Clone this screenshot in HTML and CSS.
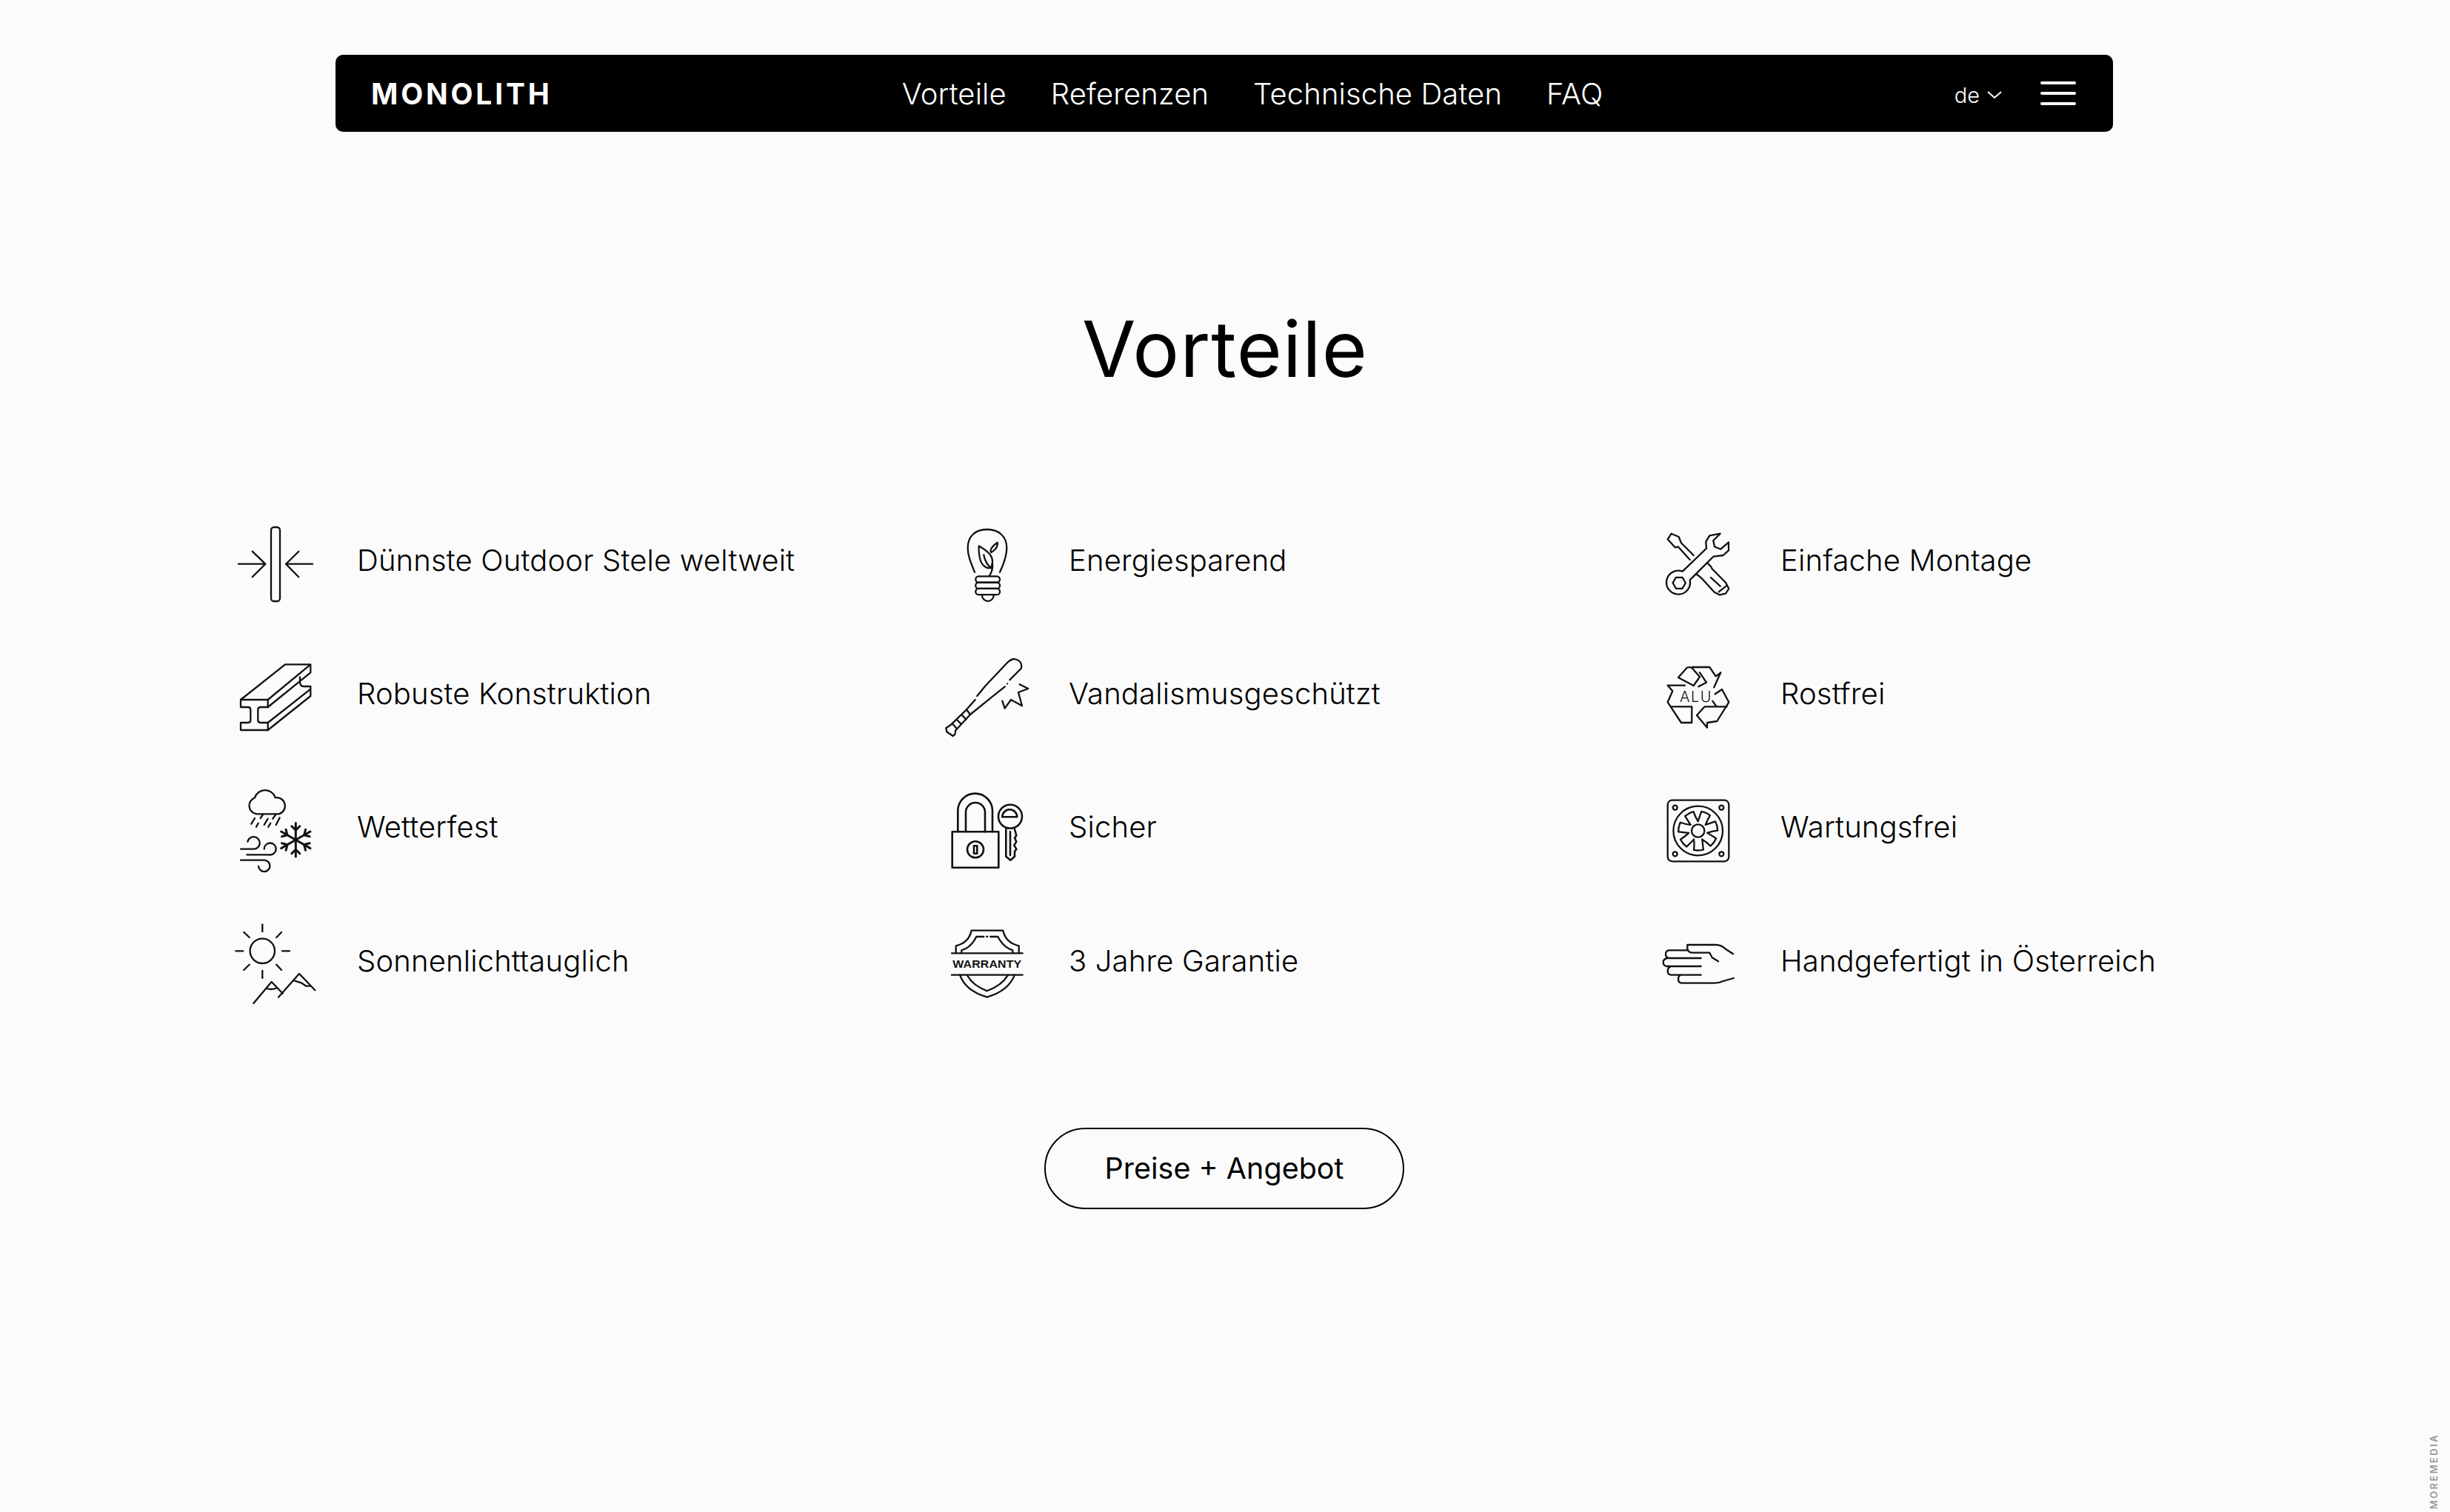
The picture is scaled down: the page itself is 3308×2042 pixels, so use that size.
FILE: index.html
```html
<!DOCTYPE html>
<html lang="de">
<head>
    <meta charset="UTF-8">
    <meta name="viewport" content="width=device-width, initial-scale=1.0">
    <title>Monolith - Vorteile</title>
    <link rel="stylesheet" href="styles.css">
</head>
<body>
    <header class="navbar">
        <a class="logo" href="#">MONOLITH</a>
        <nav class="nav-links">
            <a href="#">Vorteile</a>
            <a href="#">Referenzen</a>
            <a href="#">Technische Daten</a>
            <a href="#">FAQ</a>
        </nav>
        <div class="nav-right">
            <span class="lang">de
                <svg class="chevron" viewBox="0 0 20 10"><path d="M1 1l9 8 9-8"/></svg>
            </span>
            <div class="burger"><span></span><span></span><span></span></div>
        </div>
    </header>

    <h1>Vorteile</h1>

    <section class="features">
        <!-- Spalte 1 -->
        <div class="feature">
            <svg class="icon" viewBox="0 0 120 120">
                <rect x="50" y="16" width="12" height="100" rx="4"/>
                <path d="M6 65.700h36M24.700 48.700l17.600 17-17.600 17.600M106 65.700H70M87.300 48.700L70 65.700l17.300 17.600"/>
            </svg>
            <span>Dünnste Outdoor Stele weltweit</span>
        </div>
        <div class="feature">
            <svg class="icon" viewBox="0 0 120 120">
                <path d="M9 69h36.700v10H36q-3.700 0-3.700 3.500v14q0 3.500 3.700 3.500h9.700v10H9v-10h10q3.300 0 3.300-3.500v-14q0-3.500-3.300-3.500H9z"/>
                <path d="M9 69L69 21.300h34.300L45.700 69M103.300 21.300V32.300L45.700 79M45.700 100l57.600-45.300V51H94q-5 0-5-7M45.700 110l57.600-46V54.700M89 38.500V44"/>
            </svg>
            <span>Robuste Konstruktion</span>
        </div>
        <div class="feature">
            <svg class="icon" viewBox="0 0 120 120">
                <path d="M30.700 42.300A11.300 11.300 0 0 1 28 20.400 14.500 14.500 0 0 1 55.700 20.300 11.300 11.300 0 0 1 60.700 42.300Z"/>
                <path d="M23.300 55.700L28 48M30 59.700l2.700-5M35.700 48l3.300-5M40.700 57l5-8.300M46.300 59.700l3-5M52.300 48.700l4.400-6.400M56.700 57l5-9.700"/>
                <path d="M9 89.700h18.300A8.300 8.300 0 1 0 18.300 79.700M17.300 97.300H47A8 8 0 1 0 40.700 89.700M9 104.700h31.700A7.700 7.700 0 1 1 33 113"/>
                <g class="snow" transform="translate(83.300 77.300)">
                    <path id="arm" d="M0 0V-22.700M-5.500 -18.500L0 -13l5.500-5.500"/>
                    <use href="#arm" transform="rotate(60)"/>
                    <use href="#arm" transform="rotate(120)"/>
                    <use href="#arm" transform="rotate(180)"/>
                    <use href="#arm" transform="rotate(240)"/>
                    <use href="#arm" transform="rotate(300)"/>
                </g>
            </svg>
            <span>Wetterfest</span>
        </div>
        <div class="feature">
            <svg class="icon" viewBox="0 0 120 120">
                <circle cx="38.300" cy="47.300" r="16.700"/>
                <path d="M38.300 11.300v10M38.300 74v10M2.300 47.300h10M65 47.300h10M13.300 22l7.400 7M64 22l-6.700 7M13.300 73l7.400-7.300M64 73l-6.700-7.300"/>
                <path d="M26.300 118l24.400-29 15 15.700M60 109.700L88 78l21.300 22.300"/>
                <path d="M44 98q6.700 2.300 14-.7M80 87l10.700 3.300 6.600 4.400h6"/>
            </svg>
            <span>Sonnenlichttauglich</span>
        </div>

        <!-- Spalte 2 -->
        <div class="feature">
            <svg class="icon" viewBox="0 0 120 120">
                <path d="M39 76.700C33 62 29.700 54 29.700 44 29.700 28 40 19 55.700 19 71 19 82.300 28 82.300 44 82.300 54 78 66 73 76.700"/>
                <rect x="40.300" y="82.300" width="32.700" height="8.300" rx="4"/>
                <rect x="40.300" y="90.600" width="32.700" height="8.300" rx="4"/>
                <rect x="40.300" y="98.900" width="32.700" height="8.300" rx="4"/>
                <path d="M49 108a7.800 7.800 0 0 0 15.700 0"/>
                <path d="M44.700 41.300C52 46 63 52 63 62 63 68 61 71 58 71.300 50 70 44 62 44.700 41.300Z"/>
                <path d="M51.300 53.300Q53 64 61 71.300M63 65Q64 74 59 81.300M69.700 36.700Q71 44 61.300 50 58 45 69.700 36.700Z"/>
            </svg>
            <span>Energiesparend</span>
        </div>
        <div class="feature">
            <svg class="icon" viewBox="0 0 120 120">
                <path d="M42.300 64L53 50.700 83 19Q88 14 93 14 102.300 16 102.300 24 102.300 26 101.300 27.300L86.300 42.300M83 47.300h.1M79.700 51.300L59.700 67.300 33 89 13 110.700Q13 116 11.300 116.700L9.700 118 1.300 112.300.3 107.300 6.300 103.300 28 82.300 39.700 69"/>
                <path d="M28 82.300l5 6.700M21.300 89l6 6.700M14.700 95.700l6 6M9 101.300l5.700 6.700"/>
                <path d="M76.300 70.700l3.400 10L88 69l15 8.300L98 59l13.300-5-11.600-5.700"/>
            </svg>
            <span>Vandalismusgeschützt</span>
        </div>
        <div class="feature">
            <svg class="icon thick" viewBox="0 0 120 120">
                <rect x="8.700" y="66.300" width="62.600" height="48.400"/>
                <path d="M16.300 66.300V38A23.300 23.300 0 0 1 63 38V66.300M27 66.300V40A13 13 0 0 1 53 40V66.300"/>
                <circle cx="40" cy="90.300" r="11"/>
                <rect x="38" y="85.300" width="4.300" height="10.400"/>
                <circle cx="87" cy="45.700" r="16"/>
                <path d="M76.300 46.300a10 10 0 0 1 20 0Z"/>
                <path d="M81.300 61.300v38.400l6 5 5.700-5V93l2.300-3.300-3-5 3-5-2.300-5 2.300-3.400-2.300-8.300M87 66.300V98"/>
            </svg>
            <span>Sicher</span>
        </div>
        <div class="feature">
            <svg class="icon" viewBox="0 0 120 120">
                <path d="M8 50.300h95.700M8 79.700h95.700"/>
                <path d="M13.700 50.300v-10C24 38 32 32 34.700 19.700h42.600C80 32 88 38 98.700 40.300v10"/>
                <path d="M21.300 49.700v-3.400C30 44 37 37 41.300 28h10M55.200 28h1M60.300 28h10C75 37 82 44 90.300 46.300v3.400"/>
                <path d="M19 79.700C24.700 96 39.700 105 55.700 109.700 71.700 105 86.700 96 93 79.700M29 80.300C35 91 44 97 55.700 101.300 67 97 77 91 83.700 80.300"/>
                <text class="warranty" x="55.800" y="70.400" textLength="93" lengthAdjust="spacingAndGlyphs">WARRANTY</text>
            </svg>
            <span>3 Jahre Garantie</span>
        </div>

        <!-- Spalte 3 -->
        <div class="feature">
            <svg class="icon" viewBox="0 0 120 120">
                <path d="M48.700 54L32 37.300 28.700 29l-10-4.300-5 7.600 10 11 4-1 16 17.700"/>
                <path d="M68 65l4 4 1.700 3.300L92 90.700l4.300 8.300-4.300 6.700-8.300 1.600-6.700-3.300-16.700-18.300-5-4.400-2.300-1.300M72 84l12.700 11.700M82.700 103.300l11-8.600"/>
                <path d="M33.700 75.700L66 44.700l-.7-9 5-8.400 14.400-2.600-9.400 9.300 1.700 8.300 8.300 3.400L96 36.300v11L88.700 54l-13.400 1.700-31.600 31.600A16 16 0 1 1 33.700 75.700Z"/>
                <path d="M20.600 91.300l4.300-7.500h8.700l4.300 7.500-4.300 7.500h-8.700Z"/>
            </svg>
            <span>Einfache Montage</span>
        </div>
        <div class="feature">
            <svg class="icon" viewBox="0 0 120 120">
                <path d="M28 39L40 25.500Q46 24 49 29L57 38 48.700 50Z"/>
                <path d="M47 25h23.300l8.400 12.300 6.600-5-9 20M55.300 51.300L66 45.700 57 32.300"/>
                <path d="M37 49.700H13.700l6.600 7.600-6.600 15L32 100h14.300V78.300H18"/>
                <path d="M93.700 78.300H63.700L53 90l14 16.700V100l13.300-2 16-25.700L87 55l-9.300 6.300M74.300 70.700l5.400 7.600"/>
                <text class="alu" x="52" y="72.300">ALU</text>
            </svg>
            <span>Rostfrei</span>
        </div>
        <div class="feature">
            <svg class="icon" viewBox="0 0 120 120">
                <rect x="13.700" y="23.700" width="82.600" height="82.600" rx="6"/>
                <circle cx="23.700" cy="33.700" r="3"/>
                <circle cx="86.300" cy="33.700" r="3"/>
                <circle cx="23.700" cy="96.300" r="3"/>
                <circle cx="86.300" cy="96.300" r="3"/>
                <g transform="translate(54.700 65)">
                    <circle r="33.300"/>
                    <circle r="8.700"/>
                    <path id="blade" d="M0 -13L4.600 -26.100A26.500 26.500 0 0 1 16.300 -20.900Q12 -14 10.200 -8.100"/>
                    <use href="#blade" transform="rotate(51.430)"/>
                    <use href="#blade" transform="rotate(102.860)"/>
                    <use href="#blade" transform="rotate(154.290)"/>
                    <use href="#blade" transform="rotate(205.710)"/>
                    <use href="#blade" transform="rotate(257.140)"/>
                    <use href="#blade" transform="rotate(308.570)"/>
                </g>
            </svg>
            <span>Wartungsfrei</span>
        </div>
        <div class="feature">
            <svg class="icon" viewBox="0 0 120 120">
                <path d="M102 51.300L92 44.700Q86 39 78.700 39H40.300V44.700Q42 49.700 47 49.700H70.300L73.700 56.300 82 61.300"/>
                <path d="M40.300 46.300h-25Q11 47 11 51.500 11 56 15.300 57h43.400M13.700 57Q7.700 58 7.700 62.500 7.700 67 12 68h46.700M17 69Q13.700 70 13.700 74 13.700 79 18 79.700h40.700M31.300 79.700Q28 81 28 85 28 90 32 90.700h45Q83 90.700 88.700 88L102.700 84"/>
            </svg>
            <span>Handgefertigt in Österreich</span>
        </div>
    </section>

    <div class="cta">
        <a class="cta-button" href="#">Preise + Angebot</a>
    </div>

    <div class="credit">MOREMEDIA</div>
</body>
</html>
```

FILE: styles.css
```css
* {
    box-sizing: border-box;
}
html, body {
    margin: 0;
    padding: 0;
}
body {
    position: relative;
    height: 2042px;
    overflow: hidden;
    background-color: #fbfbfb;
    color: #000;
    font-family: Inter, "Liberation Sans", sans-serif;
    font-weight: 300;
}
a {
    color: inherit;
    text-decoration: none;
}
.navbar {
    display: flex;
    align-items: center;
    width: 2400px;
    height: 104px;
    margin: 74px 0 0 453px;
    padding: 0 50px 0 48px;
    background-color: #000;
    border-radius: 10px;
    color: #fff;
}
.logo {
    font-size: 39px;
    font-weight: 700;
    letter-spacing: 3.8px;
}
.nav-links {
    display: flex;
    gap: 60px;
    margin-left: 472px;
    font-size: 40px;
    letter-spacing: 0.1px;
}
.nav-right {
    display: flex;
    align-items: center;
    gap: 52px;
    margin-left: auto;
}
.lang {
    display: flex;
    align-items: center;
    gap: 10px;
    font-size: 29px;
    padding-top: 4px;
}
.chevron {
    width: 20px;
    height: 10px;
    fill: none;
    stroke: #fff;
    stroke-width: 2;
}
.burger {
    display: flex;
    flex-direction: column;
    gap: 10px;
    width: 48px;
}
.burger span {
    height: 4px;
    background-color: #fff;
    border-radius: 2px;
}
h1 {
    margin: 228px 0 0;
    font-size: 105px;
    line-height: 130px;
    font-weight: 400;
    letter-spacing: 1px;
    text-align: center;
}
.features {
    display: grid;
    grid-template-columns: repeat(3, 961px);
    grid-template-rows: repeat(4, 120px);
    grid-auto-flow: column;
    row-gap: 60.4px;
    margin: 160px 0 0 316px;
}
.feature {
    display: flex;
    align-items: center;
    gap: 46px;
    font-size: 40px;
    letter-spacing: 0.15px;
}
.icon {
    flex: none;
    width: 120px;
    height: 120px;
    overflow: visible;
    fill: none;
    stroke: #111;
    stroke-width: 2.3;
    stroke-linecap: round;
    stroke-linejoin: round;
}
.icon.thick {
    stroke-width: 2.6;
}
.snow {
    stroke-width: 3;
}
.warranty {
    fill: #111;
    stroke: none;
    font-family: "Liberation Sans", sans-serif;
    font-size: 15px;
    font-weight: 700;
    text-anchor: middle;
}
.alu {
    fill: #111;
    stroke: none;
    font-size: 20px;
    font-weight: 300;
    letter-spacing: 1.5px;
    text-anchor: middle;
}
.cta {
    display: flex;
    justify-content: center;
    margin-top: 166px;
    padding-right: 2px;
}
.cta-button {
    display: flex;
    align-items: center;
    justify-content: center;
    width: 486px;
    height: 110px;
    border: 2px solid #000;
    border-radius: 55px;
    font-size: 39.5px;
    font-weight: 400;
}
.credit {
    position: absolute;
    right: 14px;
    bottom: 4px;
    writing-mode: vertical-rl;
    transform: rotate(180deg);
    color: #999;
    font-size: 13px;
    font-weight: 600;
    letter-spacing: 2.4px;
}
```
